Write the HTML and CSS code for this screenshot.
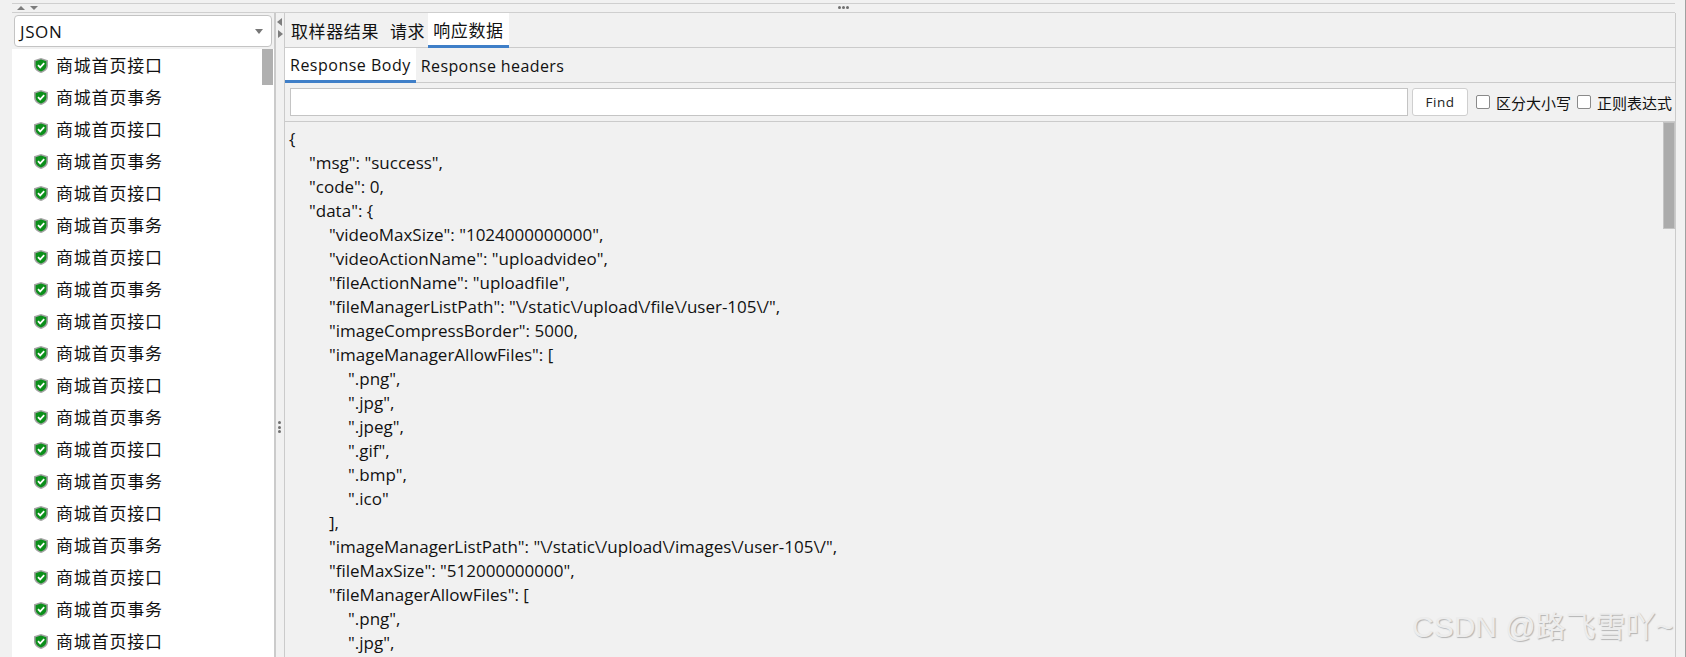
FILE: index.html
```html
<!DOCTYPE html>
<html lang="zh">
<head>
<meta charset="utf-8">
<title>JSON</title>
<link rel="stylesheet" href="styles.css">
</head>
<body>
<svg class="defs" width="0" height="0">
  <defs>
    <symbol id="ok" viewBox="0 0 14 15">
      <path d="M7 0 14 2.2V7.6C14 11.2 11 14 7 15 3 14 0 11.2 0 7.6V2.2Z" fill="#a3a3a3"/>
      <path d="M7 1.5 12.4 3.2V7.5C12.4 10.4 10.2 12.5 7 13.5 3.8 12.5 1.6 10.4 1.6 7.5V3.2Z" fill="#0b8f1a"/>
      <path d="M4 7.1 6.2 9.4 10.2 5.2" fill="none" stroke="#fff" stroke-width="1.7"/>
    </symbol>
  </defs>
</svg>
<div class="app">
  <div class="topsplit">
    <span class="tri-up"></span><span class="tri-down"></span>
    <span class="hdots"><i></i><i></i><i></i></span>
  </div>
  <div class="main">
    <div class="left">
      <div class="combo"><span>JSON</span><span class="caret"></span></div>
      <div class="list">
        <div class="rows" id="rows">
          <div class="row"><svg class="ico"><use href="#ok"/></svg>商城首页接口</div>
          <div class="row"><svg class="ico"><use href="#ok"/></svg>商城首页事务</div>
          <div class="row"><svg class="ico"><use href="#ok"/></svg>商城首页接口</div>
          <div class="row"><svg class="ico"><use href="#ok"/></svg>商城首页事务</div>
          <div class="row"><svg class="ico"><use href="#ok"/></svg>商城首页接口</div>
          <div class="row"><svg class="ico"><use href="#ok"/></svg>商城首页事务</div>
          <div class="row"><svg class="ico"><use href="#ok"/></svg>商城首页接口</div>
          <div class="row"><svg class="ico"><use href="#ok"/></svg>商城首页事务</div>
          <div class="row"><svg class="ico"><use href="#ok"/></svg>商城首页接口</div>
          <div class="row"><svg class="ico"><use href="#ok"/></svg>商城首页事务</div>
          <div class="row"><svg class="ico"><use href="#ok"/></svg>商城首页接口</div>
          <div class="row"><svg class="ico"><use href="#ok"/></svg>商城首页事务</div>
          <div class="row"><svg class="ico"><use href="#ok"/></svg>商城首页接口</div>
          <div class="row"><svg class="ico"><use href="#ok"/></svg>商城首页事务</div>
          <div class="row"><svg class="ico"><use href="#ok"/></svg>商城首页接口</div>
          <div class="row"><svg class="ico"><use href="#ok"/></svg>商城首页事务</div>
          <div class="row"><svg class="ico"><use href="#ok"/></svg>商城首页接口</div>
          <div class="row"><svg class="ico"><use href="#ok"/></svg>商城首页事务</div>
          <div class="row"><svg class="ico"><use href="#ok"/></svg>商城首页接口</div>
        </div>
        <div class="vbar"><div class="thumb thumb-list"></div></div>
      </div>
    </div>
    <div class="divider">
      <span class="tri-left"></span><span class="tri-right"></span>
      <span class="vdots"><i></i><i></i><i></i></span>
    </div>
    <div class="right">
      <div class="tabs tabs-main">
        <div class="tab">取样器结果</div>
        <div class="tab">请求</div>
        <div class="tab active">响应数据</div>
      </div>
      <div class="tabs tabs-sub">
        <div class="tab active">Response Body</div>
        <div class="tab">Response headers</div>
      </div>
      <div class="search">
        <div class="input"></div>
        <div class="btn">Find</div>
        <label class="check"><span class="box"></span>区分大小写</label>
        <label class="check"><span class="box"></span>正则表达式</label>
      </div>
      <div class="body">
        <div class="code">
          <div>{</div>
          <div class="l1">"msg": "success",</div>
          <div class="l1">"code": 0,</div>
          <div class="l1">"data": {</div>
          <div class="l2">"videoMaxSize": "1024000000000",</div>
          <div class="l2">"videoActionName": "uploadvideo",</div>
          <div class="l2">"fileActionName": "uploadfile",</div>
          <div class="l2">"fileManagerListPath": "\/static\/upload\/file\/user-105\/",</div>
          <div class="l2">"imageCompressBorder": 5000,</div>
          <div class="l2">"imageManagerAllowFiles": [</div>
          <div class="l3">".png",</div>
          <div class="l3">".jpg",</div>
          <div class="l3">".jpeg",</div>
          <div class="l3">".gif",</div>
          <div class="l3">".bmp",</div>
          <div class="l3">".ico"</div>
          <div class="l2">],</div>
          <div class="l2">"imageManagerListPath": "\/static\/upload\/images\/user-105\/",</div>
          <div class="l2">"fileMaxSize": "512000000000",</div>
          <div class="l2">"fileManagerAllowFiles": [</div>
          <div class="l3">".png",</div>
          <div class="l3">".jpg",</div>
        </div>
        <div class="vbar vbar-code"><div class="thumb thumb-code"></div></div>
      </div>
    </div>
    <div class="gutter"></div>
  </div>
</div>
<div class="watermark">CSDN @路飞雪吖~</div>
</body>
</html>
```
FILE: styles.css
```css
* { box-sizing: border-box; }
html, body { margin: 0; padding: 0; }
body {
  width: 1686px;
  height: 657px;
  overflow: hidden;
  background: #f1f1f1;
  color: #111;
  font-family: "Open Sans", "Noto Sans CJK SC", sans-serif;
  position: relative;
}
.defs { position: absolute; }
.app { display: flex; flex-direction: column; height: 657px; border-right: 1px solid #a0a0a0; }

.topsplit {
  height: 10px;
  margin: 3px 10px 0 12px;
  border-top: 1px solid #cfcfcf;
  border-bottom: 1px solid #cfcfcf;
  display: flex;
  align-items: center;
  position: relative;
  padding-left: 5px;
  gap: 5px;
}
.tri-up, .tri-down { width: 0; height: 0; border-left: 4px solid transparent; border-right: 4px solid transparent; }
.tri-up { border-bottom: 4px solid #7d7d7d; }
.tri-down { border-top: 4px solid #7d7d7d; }
.hdots { position: absolute; left: 826px; top: 2px; display: flex; gap: 1px; }
.hdots i, .vdots i { display: block; width: 3px; height: 3px; border-radius: 50%; background: #707070; }

.main { flex: 1; display: flex; min-height: 0; }
.left { width: 264px; margin-left: 12px; display: flex; flex-direction: column; border-right: 2px solid #cbcbcb; }
.combo {
  height: 32px;
  margin: 2px;
  background: #fff;
  border: 1px solid #c4c4c4;
  border-radius: 4px;
  display: flex;
  align-items: center;
  justify-content: space-between;
  padding: 1px 8px 0 5px;
  font-size: 17px;
  letter-spacing: .6px;
  flex: none;
}
.caret { width: 0; height: 0; border-left: 4px solid transparent; border-right: 4px solid transparent; border-top: 5px solid #777; }
.list { flex: 1; min-height: 0; background: #fff; display: flex; overflow: hidden; }
.rows { flex: 1; }
.row {
  height: 32px;
  display: flex;
  align-items: center;
  padding-left: 22px;
  padding-bottom: 2px;
  font-size: 17px;
  letter-spacing: .8px;
  color: #111;
}
.ico { width: 14px; height: 15px; margin-top: 2px; margin-right: 8px; flex: none; }
.vbar { width: 12px; flex: none; }
.thumb { background: #b0b0b0; width: 11px; }
.thumb-list { height: 36px; }

.divider { width: 9px; flex: none; border-right: 1px solid #cbcbcb; position: relative; }
.tri-left, .tri-right { position: absolute; left: 1px; width: 0; height: 0; border-top: 4px solid transparent; border-bottom: 4px solid transparent; }
.tri-left { top: 5px; border-right: 5px solid #7d7d7d; }
.tri-right { top: 17px; left: 2px; border-left: 5px solid #7d7d7d; }
.vdots { position: absolute; left: 2px; top: 408px; display: flex; flex-direction: column; gap: 1.5px; }

.right { flex: 1; min-width: 0; display: flex; flex-direction: column; }
.tabs { display: flex; flex: none; border-bottom: 1px solid #cbcbcb; font-size: 16px; letter-spacing: .4px; }
.tabs-main { height: 35px; }
.tabs-sub { height: 35px; }
.tab { padding: 0 6px; display: flex; align-items: center; height: calc(100% + 1px); }
.tab.active { background: #fff; border-bottom: 3px solid #3f7fc8; }
.tabs-main .tab { font-size: 17px; letter-spacing: .6px; }
.tabs-main .tab:nth-child(2) { padding: 0 3px 0 5px; }
.tabs-main .tab.active { padding: 0 5px; }
.tabs-sub .tab { padding-top: 1px; padding-left: 5px; }
.tabs-sub .tab.active { padding-right: 5px; letter-spacing: .5px; }
.search { height: 39px; flex: none; display: flex; align-items: center; padding: 0 3px 0 5px; border-bottom: 1px solid #cbcbcb; }
.input { flex: 1; height: 28px; background: #fff; border: 1px solid #c4c4c4; }
.btn {
  width: 56px; height: 28px; margin-left: 4px;
  background: #fff; border: 1px solid #cfcfcf; border-radius: 3px;
  display: flex; align-items: center; justify-content: center;
  font-size: 13.5px; letter-spacing: .5px;
  color: #222;
}
.check { display: flex; align-items: center; font-size: 15px; margin-left: 8px; color: #111; }
.check + .check { margin-left: 6px; }
.box { width: 14px; height: 14px; border: 1px solid #8a8a8a; border-radius: 2px; background: #fff; margin-right: 6px; }

.body { flex: 1; min-height: 0; display: flex; overflow: hidden; }
.code { flex: 1; padding: 5px 0 0 4px; font-size: 17px; line-height: 24px; color: #111; }
.code div { white-space: pre; }
.l1 { padding-left: 20px; }
.l2 { padding-left: 40px; }
.l3 { padding-left: 59px; }
.vbar-code { width: 12px; }
.thumb-code { height: 107px; background: #ababab; border: 1px solid #c4c4c4; width: 12px; }

.gutter { width: 10px; flex: none; border-left: 1px solid #cbcbcb; }

.watermark {
  position: absolute;
  left: 1412px;
  top: 608px;
  font-family: "Liberation Sans", "Noto Sans CJK SC", sans-serif;
  font-size: 30px;
  line-height: 38px;
  color: #ececec;
  text-shadow: 1px 1px 1px #b4b4b4;
  white-space: nowrap;
}
```
